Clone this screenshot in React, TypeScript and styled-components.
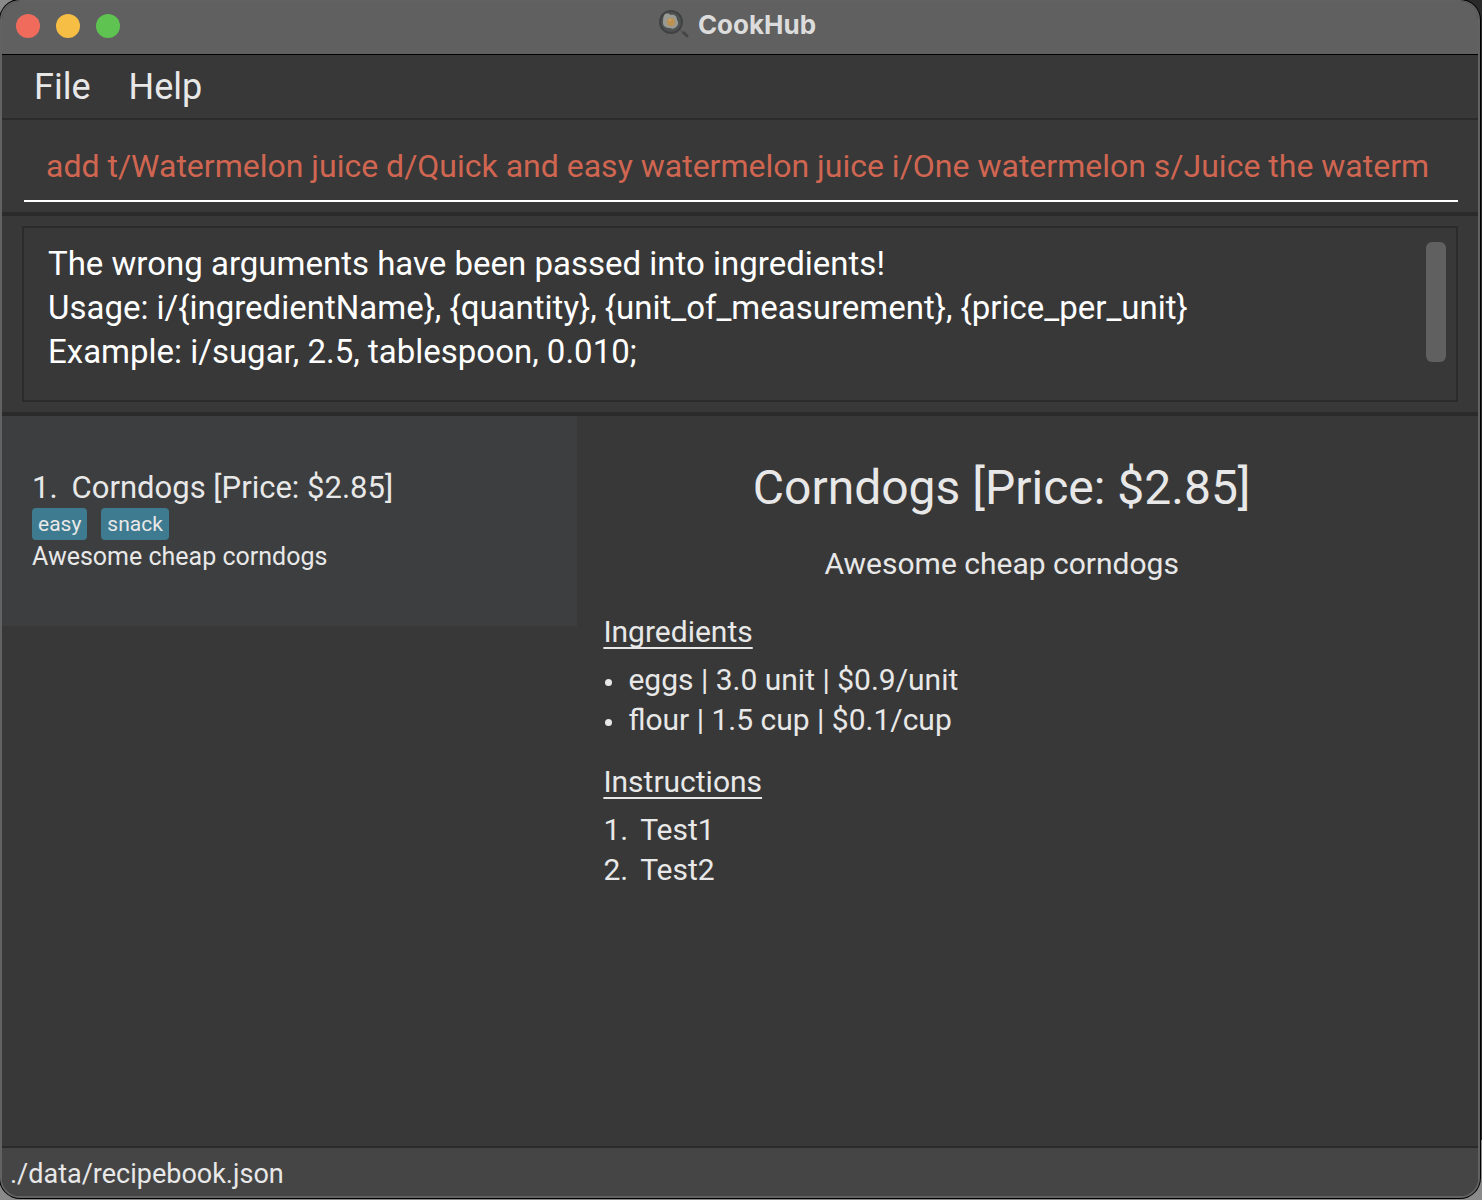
import React, { useState } from 'react';
import styled, { createGlobalStyle } from 'styled-components';

const GlobalStyle = createGlobalStyle`
  *, *::before, *::after { box-sizing: border-box; }
  body {
    margin: 0;
    background: #8a8a8a;
    color: #e8e8e8;
    font-family: Roboto, 'Liberation Sans', sans-serif;
  }
  h1, h2, p, ul, ol { margin: 0; padding: 0; font-weight: 400; }
  ul, ol { list-style: none; }
  button, input, textarea { font-family: inherit; color: inherit; }
`;

const Desktop = styled.div`
  display: flex;
  min-height: 100vh;
  padding: 0 2px 2px 0;
  background: linear-gradient(#2a2a2a, #2a2a2a) top right / 20px 95% no-repeat #8a8a8a;
`;

const Window = styled.main`
  flex: 1;
  min-width: 0;
  display: flex;
  flex-direction: column;
  overflow: hidden;
  background: #383838;
  border: 2px solid #626262;
  border-top-width: 1px;
  border-radius: 20px;
  box-shadow: 0 0 0 1px #000;
`;

const TitleBar = styled.header`
  display: grid;
  grid-template-columns: 1fr auto 1fr;
  align-items: center;
  height: 54px;
  padding: 0 14px 4px;
  background: #606060;
  border-bottom: 1px solid #000;
`;

const Lights = styled.div`
  display: flex;
  gap: 16px;
`;

const Light = styled.button<{ $color: string }>`
  width: 24px;
  height: 24px;
  padding: 0;
  border: 0;
  border-radius: 50%;
  background: ${(p) => p.$color};
`;

const Title = styled.div`
  display: flex;
  align-items: center;
  gap: 8px;
  padding: 0 6px 2px 0;
  color: #dcdcdc;
  font-family: Inter, sans-serif;
  font-size: 26px;
  line-height: 32px;
  font-weight: 700;
`;

const MenuBar = styled.nav`
  display: flex;
  gap: 38px;
  height: 65px;
  padding: 0 32px;
  border-bottom: 2px solid #2b2b2b;
`;

const MenuButton = styled.button`
  padding: 0;
  border: 0;
  background: none;
  font-size: 36px;
  line-height: 44px;
`;

const CommandBox = styled.div`
  height: 96px;
  padding: 10px 20px 10px 22px;
  border-bottom: 4px solid #2b2b2b;
`;

const CommandInput = styled.input`
  display: block;
  width: 100%;
  height: 72px;
  padding: 2px 20px 0 22px;
  border: 0;
  border-bottom: 2px solid #fff;
  outline: 0;
  background: none;
  color: #d06651;
  font-size: 32px;
`;

const ResultBox = styled.div`
  padding: 10px 20px;
  border-bottom: 4px solid #2b2b2b;
`;

const ResultFrame = styled.div`
  display: flex;
  height: 176px;
  padding: 14px 10px 14px 24px;
  border: 2px solid #2b2b2b;
`;

const ResultText = styled.textarea`
  flex: 1;
  min-width: 0;
  padding: 0;
  border: 0;
  outline: 0;
  resize: none;
  overflow: hidden;
  background: none;
  color: #fff;
  font-size: 33px;
  line-height: 44px;
`;

const ScrollThumb = styled.div`
  width: 20px;
  height: 120px;
  border-radius: 6px;
  background: #606060;
`;

const Content = styled.div`
  flex: 1;
  display: grid;
  grid-template-columns: 23fr 36fr;
`;

const Card = styled.li`
  height: 210px;
  padding: 52px 30px;
  background: #3c3e3f;
`;

const CardTitle = styled.h2`
  display: flex;
  gap: 14px;
  font-size: 31px;
  line-height: 40px;
`;

const Tags = styled.ul`
  display: flex;
  gap: 14px;
`;

const Tag = styled.li`
  padding: 0 6px;
  border-radius: 4px;
  background: #3e7b91;
  font-size: 21px;
  line-height: 32px;
`;

const CardText = styled.p`
  font-size: 25px;
  line-height: 34px;
`;

const Details = styled.article`
  padding: 40px 78px 40px 26px;
  font-size: 30px;
  line-height: 40px;
`;

const RecipeName = styled.h1`
  font-size: 48px;
  line-height: 64px;
  text-align: center;
`;

const Summary = styled.p`
  padding: 24px 0 28px;
  text-align: center;
`;

const SectionTitle = styled.h2`
  font-size: 30px;
  line-height: 40px;
  margin-bottom: 8px;
  text-decoration: underline;
  text-decoration-thickness: 2px;
  text-underline-offset: 5px;
  text-decoration-skip-ink: none;
`;

const Items = styled.ul`
  margin-bottom: 22px;
`;

const Item = styled.li<{ $gap: number }>`
  display: flex;
  align-items: center;
  gap: ${(p) => p.$gap}px;
`;

const Bullet = styled.span`
  width: 7px;
  height: 7px;
  margin: 4px 0 0 2px;
  border-radius: 50%;
  background: currentColor;
`;

const StatusBar = styled.footer`
  padding: 8px 8px 4px;
  border-top: 2px solid #2b2b2b;
  background: #454545;
  font-size: 27px;
  line-height: 36px;
`;

const PanIcon = () => (
  <svg width="32" height="32" viewBox="0 0 32 32" aria-hidden="true">
    <path d="M22 22l1-1 3 2-1 2z" fill="#555" />
    <path d="M24 24l2-2 4 4c1 2 0 3-2 2z" fill="#454545" />
    <circle cx="13" cy="13" r="12" fill="#404243" />
    <circle cx="13" cy="13" r="10" fill="#4f5253" />
    <path d="M7 5c3-1 4 0 6 1 4-1 6 2 6 5 2 2 1 6-1 7-2 2-4 2-6 1-3 0-7-1-7-5 0-3 0-7 2-9z" fill="#999b93" />
    <circle cx="13" cy="13" r="4" fill="#bd9150" />
    <circle cx="12" cy="11" r="1" fill="#d0ad72" />
  </svg>
);

const usage = [
  'The wrong arguments have been passed into ingredients!',
  'Usage: i/{ingredientName}, {quantity}, {unit_of_measurement}, {price_per_unit}',
  'Example: i/sugar, 2.5, tablespoon, 0.010;',
].join('\n');

const recipe = {
  name: 'Corndogs [Price: $2.85]',
  summary: 'Awesome cheap corndogs',
  tags: ['easy', 'snack'],
  ingredients: ['eggs | 3.0 unit | $0.9/unit', 'flour | 1.5 cup | $0.1/cup'],
  steps: ['Test1', 'Test2'],
};

export default function App() {
  const [command, setCommand] = useState(
    'add t/Watermelon juice d/Quick and easy watermelon juice i/One watermelon s/Juice the waterm',
  );
  return (
    <>
      <GlobalStyle />
      <Desktop>
        <Window>
          <TitleBar>
            <Lights>
              <Light $color="#f16b5d" aria-label="Close" />
              <Light $color="#f7be45" aria-label="Minimize" />
              <Light $color="#5ec351" aria-label="Zoom" />
            </Lights>
            <Title>
              <PanIcon />
              CookHub
            </Title>
          </TitleBar>
          <MenuBar>
            <MenuButton>File</MenuButton>
            <MenuButton>Help</MenuButton>
          </MenuBar>
          <CommandBox>
            <CommandInput
              aria-label="Command"
              value={command}
              spellCheck={false}
              onChange={(e) => setCommand(e.target.value)}
            />
          </CommandBox>
          <ResultBox>
            <ResultFrame>
              <ResultText aria-label="Result" readOnly wrap="off" spellCheck={false} value={usage} />
              <ScrollThumb />
            </ResultFrame>
          </ResultBox>
          <Content>
            <ul>
              <Card>
                <CardTitle>
                  <span>1.</span>
                  <span>{recipe.name}</span>
                </CardTitle>
                <Tags>
                  {recipe.tags.map((tag) => (
                    <Tag key={tag}>{tag}</Tag>
                  ))}
                </Tags>
                <CardText>{recipe.summary}</CardText>
              </Card>
            </ul>
            <Details>
              <RecipeName>{recipe.name}</RecipeName>
              <Summary>{recipe.summary}</Summary>
              <SectionTitle>Ingredients</SectionTitle>
              <Items>
                {recipe.ingredients.map((text) => (
                  <Item key={text} $gap={16}>
                    <Bullet />
                    <span>{text}</span>
                  </Item>
                ))}
              </Items>
              <SectionTitle>Instructions</SectionTitle>
              <Items as="ol">
                {recipe.steps.map((text, i) => (
                  <Item key={text} $gap={12}>
                    <span>{i + 1}.</span>
                    <span>{text}</span>
                  </Item>
                ))}
              </Items>
            </Details>
          </Content>
          <StatusBar>./data/recipebook.json</StatusBar>
        </Window>
      </Desktop>
    </>
  );
}
